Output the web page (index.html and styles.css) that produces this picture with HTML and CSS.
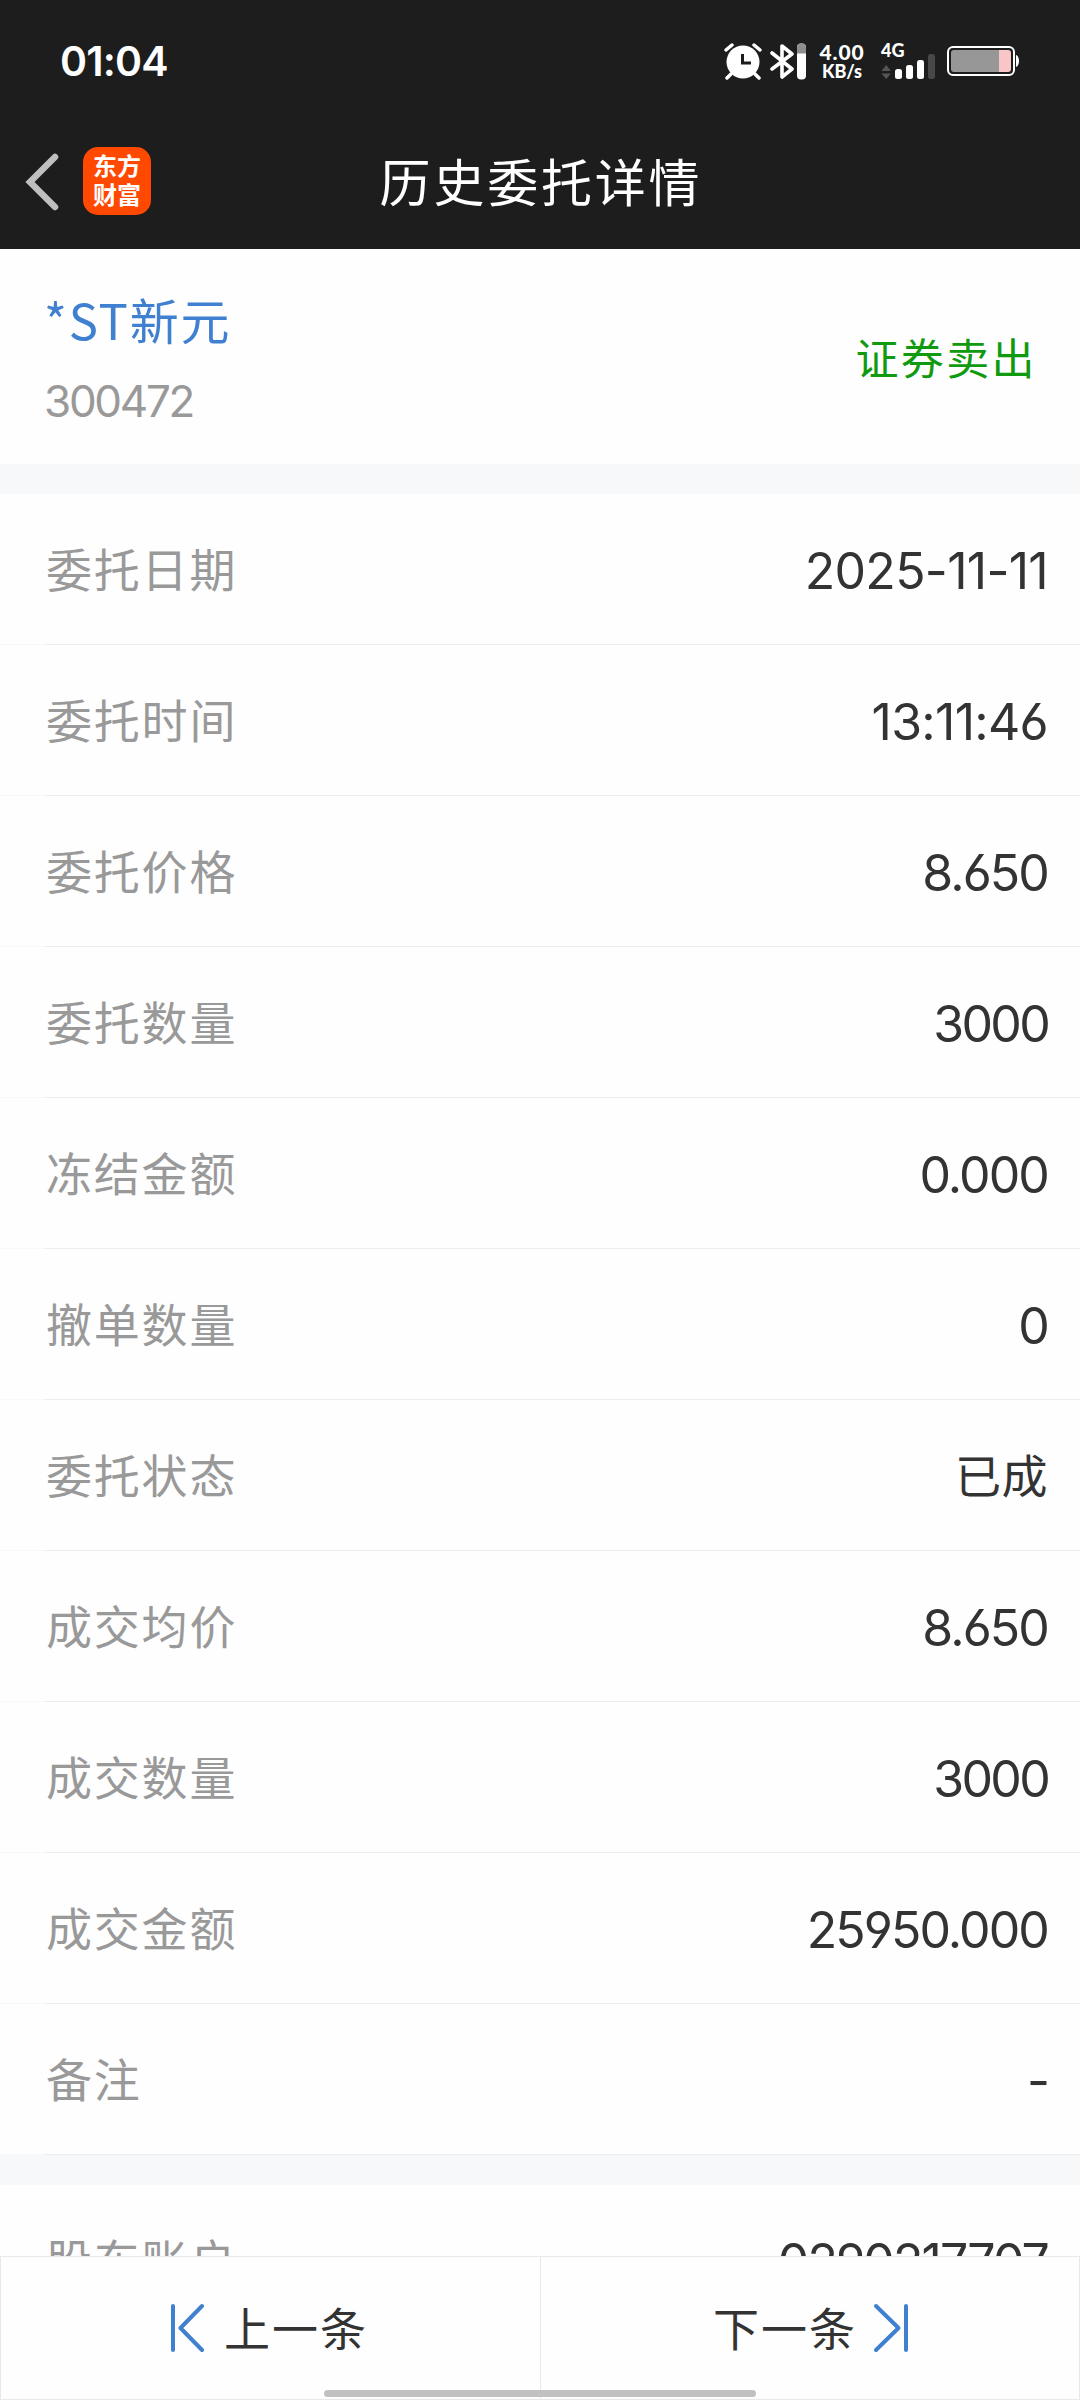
FILE: index.html
```html
<!DOCTYPE html>
<html lang="zh-CN">
<head>
  <meta charset="UTF-8">
  <meta name="viewport" content="width=device-width, initial-scale=1.0">
  <title>历史委托详情</title>
  <link rel="stylesheet" href="styles.css">
</head>
<body>
  <div class="screen">

    <!--Status bar-->
    <div class="status-bar">
      <span class="clock">01:04</span>
      <div class="status-icons">
        <svg class="alarm" width="38" height="38" viewBox="0 0 38 38">
          <circle cx="19" cy="20" r="16.500" fill="#fff"/>
          <path d="M2 8l6-5M30 3l6 5M7 32l-4 4M31 32l4 4" stroke="#fff" stroke-width="3.500" stroke-linecap="round"/>
          <path d="M18.500 12v9h8.500" fill="none" stroke="#1d1d1d" stroke-width="3"/>
        </svg>
        <svg class="bluetooth" width="37" height="37" viewBox="0 0 37 37">
          <path d="M2 10l20 16-10 8V3l10 8L2 26" fill="none" stroke="#fff" stroke-width="3.600" stroke-linejoin="round" stroke-linecap="round"/>
          <rect x="27" y="0.500" width="9" height="36" rx="4" fill="#fff"/>
          <path d="M27 10.500v-6a4 4 0 0 1 4-4h1a4 4 0 0 1 4 4v6z" fill="#8e8e8e"/>
        </svg>
        <div class="speed">
          <span class="speed-num">4.00</span>
          <span class="speed-unit">KB/s</span>
        </div>
        <div class="network">
          <span class="network-type">4G</span>
          <svg class="signal" width="55" height="25" viewBox="0 0 55 25">
            <path d="M0.500 17L5.200 11l4.700 6zM0.500 19.500h9.400L5.200 25z" fill="#555"/>
            <rect x="14" y="15" width="7" height="10" rx="2.500" fill="#fff"/>
            <rect x="25" y="11" width="7" height="14" rx="2.500" fill="#fff"/>
            <rect x="36" y="6" width="7" height="19" rx="2.500" fill="#fff"/>
            <rect x="47" y="0" width="7" height="25" rx="2.500" fill="#484848"/>
          </svg>
        </div>
        <svg class="battery" width="73" height="30" viewBox="0 0 73 30">
          <rect x="1" y="1" width="66" height="28" rx="5" fill="none" stroke="#fff" stroke-width="2"/>
          <path d="M52 4H7a3 3 0 0 0-3 3v16a3 3 0 0 0 3 3h45z" fill="#979797"/>
          <path d="M52 4h9a3 3 0 0 1 3 3v16a3 3 0 0 1-3 3h-9z" fill="#f9c6c7"/>
          <path d="M69 9c4 1 4 11 0 12z" fill="#fff"/>
        </svg>
      </div>
    </div>

    <!--Title bar-->
    <div class="title-bar">
      <svg class="back" width="34" height="58" viewBox="0 0 34 58">
        <path d="M30 4L5 29l25 25" fill="none" stroke="#bfbfbf" stroke-width="6.500" stroke-linecap="round"/>
      </svg>
      <div class="logo"><span>东方</span><span>财富</span></div>
      <h1>历史委托详情</h1>
    </div>

    <!--Stock-->
    <div class="stock">
      <div>
        <div class="stock-name">*ST新元</div>
        <div class="stock-code">300472</div>
      </div>
      <div class="direction">证券卖出</div>
    </div>

    <!--Order details-->
    <div class="list">
      <div class="row"><span class="label">委托日期</span><span class="value value-time">2025-11-11</span></div>
      <div class="row"><span class="label">委托时间</span><span class="value value-time">13:11:46</span></div>
      <div class="row"><span class="label">委托价格</span><span class="value">8.650</span></div>
      <div class="row"><span class="label">委托数量</span><span class="value value-count">3000</span></div>
      <div class="row"><span class="label">冻结金额</span><span class="value">0.000</span></div>
      <div class="row"><span class="label">撤单数量</span><span class="value">0</span></div>
      <div class="row"><span class="label">委托状态</span><span class="value value-cn">已成</span></div>
      <div class="row"><span class="label">成交均价</span><span class="value">8.650</span></div>
      <div class="row"><span class="label">成交数量</span><span class="value value-count">3000</span></div>
      <div class="row"><span class="label">成交金额</span><span class="value">25950.000</span></div>
      <div class="row"><span class="label">备注</span><span class="value">-</span></div>
    </div>
    <div class="list account">
      <div class="row"><span class="label">股东账户</span><span class="value">0290217707</span></div>
    </div>

    <!--Bottom buttons-->
    <div class="pager">
      <div class="pager-btn prev">
        <svg width="34" height="50" viewBox="0 0 34 50">
          <path d="M3 3v44M32 3L10.500 25 32 47" fill="none" stroke="#4080d0" stroke-width="4" stroke-linecap="round" stroke-linejoin="round"/>
        </svg>
        <span>上一条</span>
      </div>
      <div class="pager-btn next">
        <span>下一条</span>
        <svg width="36" height="50" viewBox="0 0 36 50">
          <path d="M33 3v44M3 3l22.500 22L3 47" fill="none" stroke="#4080d0" stroke-width="4" stroke-linecap="round" stroke-linejoin="round"/>
        </svg>
      </div>
      <div class="home-indicator"></div>
    </div>

  </div>
</body>
</html>
```
FILE: styles.css
```css
:root{
  --Bar: #1d1d1d;
  --Gap: #f7f8fa;
  --Line: #ececec;
  --Blue: #4080d0;
  --Green: #109a10;
  --Grey: #999;
  --Text: #333;
}
*{
  box-sizing: border-box;
}
body{
  margin: 0;
  font-family: Inter, "Noto Sans CJK SC", sans-serif;
  color: var(--Text);
}
.screen{
  position: relative;
  width: 1080px;
  height: 2400px;
  overflow: hidden;
  background-color: #fefefe;
}

/* status bar */
.status-bar{
  display: flex;
  justify-content: space-between;
  height: 120px;
  padding: 42px 60px 0 60px;
  background-color: var(--Bar);
  color: #fff;
}
.clock{
  font-size: 41px;
  font-weight: 600;
  line-height: 38px;
  letter-spacing: -0.8px;
}
.status-icons{
  display: flex;
  align-items: flex-start;
}
.bluetooth{
  margin: 1px 0 0 8px;
}
.speed{
  display: flex;
  flex-direction: column;
  align-items: center;
  width: 50px;
  margin-left: 10px;
  font-family: Lato, sans-serif;
  font-weight: 900;
}
.speed-num{
  font-size: 21px;
  line-height: 19px;
  letter-spacing: 0.9px;
}
.speed-unit{
  font-size: 18px;
  line-height: 20px;
}
.network{
  display: flex;
  flex-direction: column;
  width: 55px;
  margin-left: 14px;
}
.network-type{
  height: 12px;
  font-family: Lato, sans-serif;
  font-size: 18px;
  font-weight: 900;
  line-height: 16px;
}
.battery{
  margin: 4px 0 0 11px;
}

/* title bar */
.title-bar{
  position: relative;
  display: flex;
  align-items: center;
  height: 129px;
  padding: 0 0 6px 25px;
  background-color: var(--Bar);
}
.back{
  margin-top: 1px;
}
.logo{
  display: flex;
  flex-direction: column;
  align-items: center;
  justify-content: center;
  width: 68px;
  height: 68px;
  margin: 0 0 1px 24px;
  padding-bottom: 1px;
  border-radius: 15px;
  background-color: #ff4800;
  color: #fff;
  font-size: 24px;
  font-weight: 700;
  line-height: 29px;
}
.title-bar h1{
  position: absolute;
  left: 2px;
  right: 0;
  margin: 0 0 3px;
  color: #fff;
  font-size: 51px;
  font-weight: 400;
  letter-spacing: 2.8px;
  text-align: center;
}

/* stock */
.stock{
  display: flex;
  justify-content: space-between;
  height: 215px;
  padding: 32px 43px 0 44px;
}
.stock-name{
  height: 79px;
  color: var(--Blue);
  font-family: "Noto Sans CJK SC", sans-serif;
  font-size: 49px;
  line-height: 76px;
  letter-spacing: 1.8px;
}
.stock-code{
  color: var(--Grey);
  font-size: 44px;
  line-height: 82px;
  letter-spacing: -2.3px;
}
.direction{
  color: var(--Green);
  font-size: 43px;
  line-height: 156px;
  letter-spacing: 2.4px;
}

/* rows */
.list{
  border-top: 30px solid var(--Gap);
}
.row{
  display: flex;
  align-items: center;
  justify-content: space-between;
  height: 151px;
  padding: 2px 32px 0 46px;
  background: linear-gradient(90deg, #f8f8f8 45px, var(--Line) 45px) bottom / 100% 1px no-repeat;
}
.label{
  margin-bottom: 8px;
  color: var(--Grey);
  font-size: 46px;
  letter-spacing: 1.8px;
}
.value{
  font-size: 50px;
  letter-spacing: -1.9px;
  font-feature-settings: "cv03", "cv04";
}
.value-time{
  letter-spacing: -0.7px;
}
.value-count{
  letter-spacing: -2.7px;
}
.value-cn{
  margin-bottom: 8px;
  font-size: 46px;
  letter-spacing: 0.5px;
}

/* bottom */
.pager{
  position: absolute;
  left: 0;
  bottom: 0;
  display: flex;
  width: 1080px;
  height: 144px;
  border: 1px solid #e9e9e9;
  background-color: #fefefe;
}
.pager-btn{
  display: flex;
  align-items: center;
  width: 539px;
  font-size: 46px;
  letter-spacing: 2px;
}
.pager-btn span{
  margin-bottom: 5px;
}
.prev{
  gap: 20px;
  padding-left: 169px;
}
.next{
  gap: 16px;
  padding-left: 172px;
  border-left: 1px solid #e9e9e9;
}
.home-indicator{
  position: absolute;
  left: 323px;
  bottom: 2px;
  width: 432px;
  height: 7px;
  border-radius: 4px;
  background-color: #c1c1c1;
}
```
